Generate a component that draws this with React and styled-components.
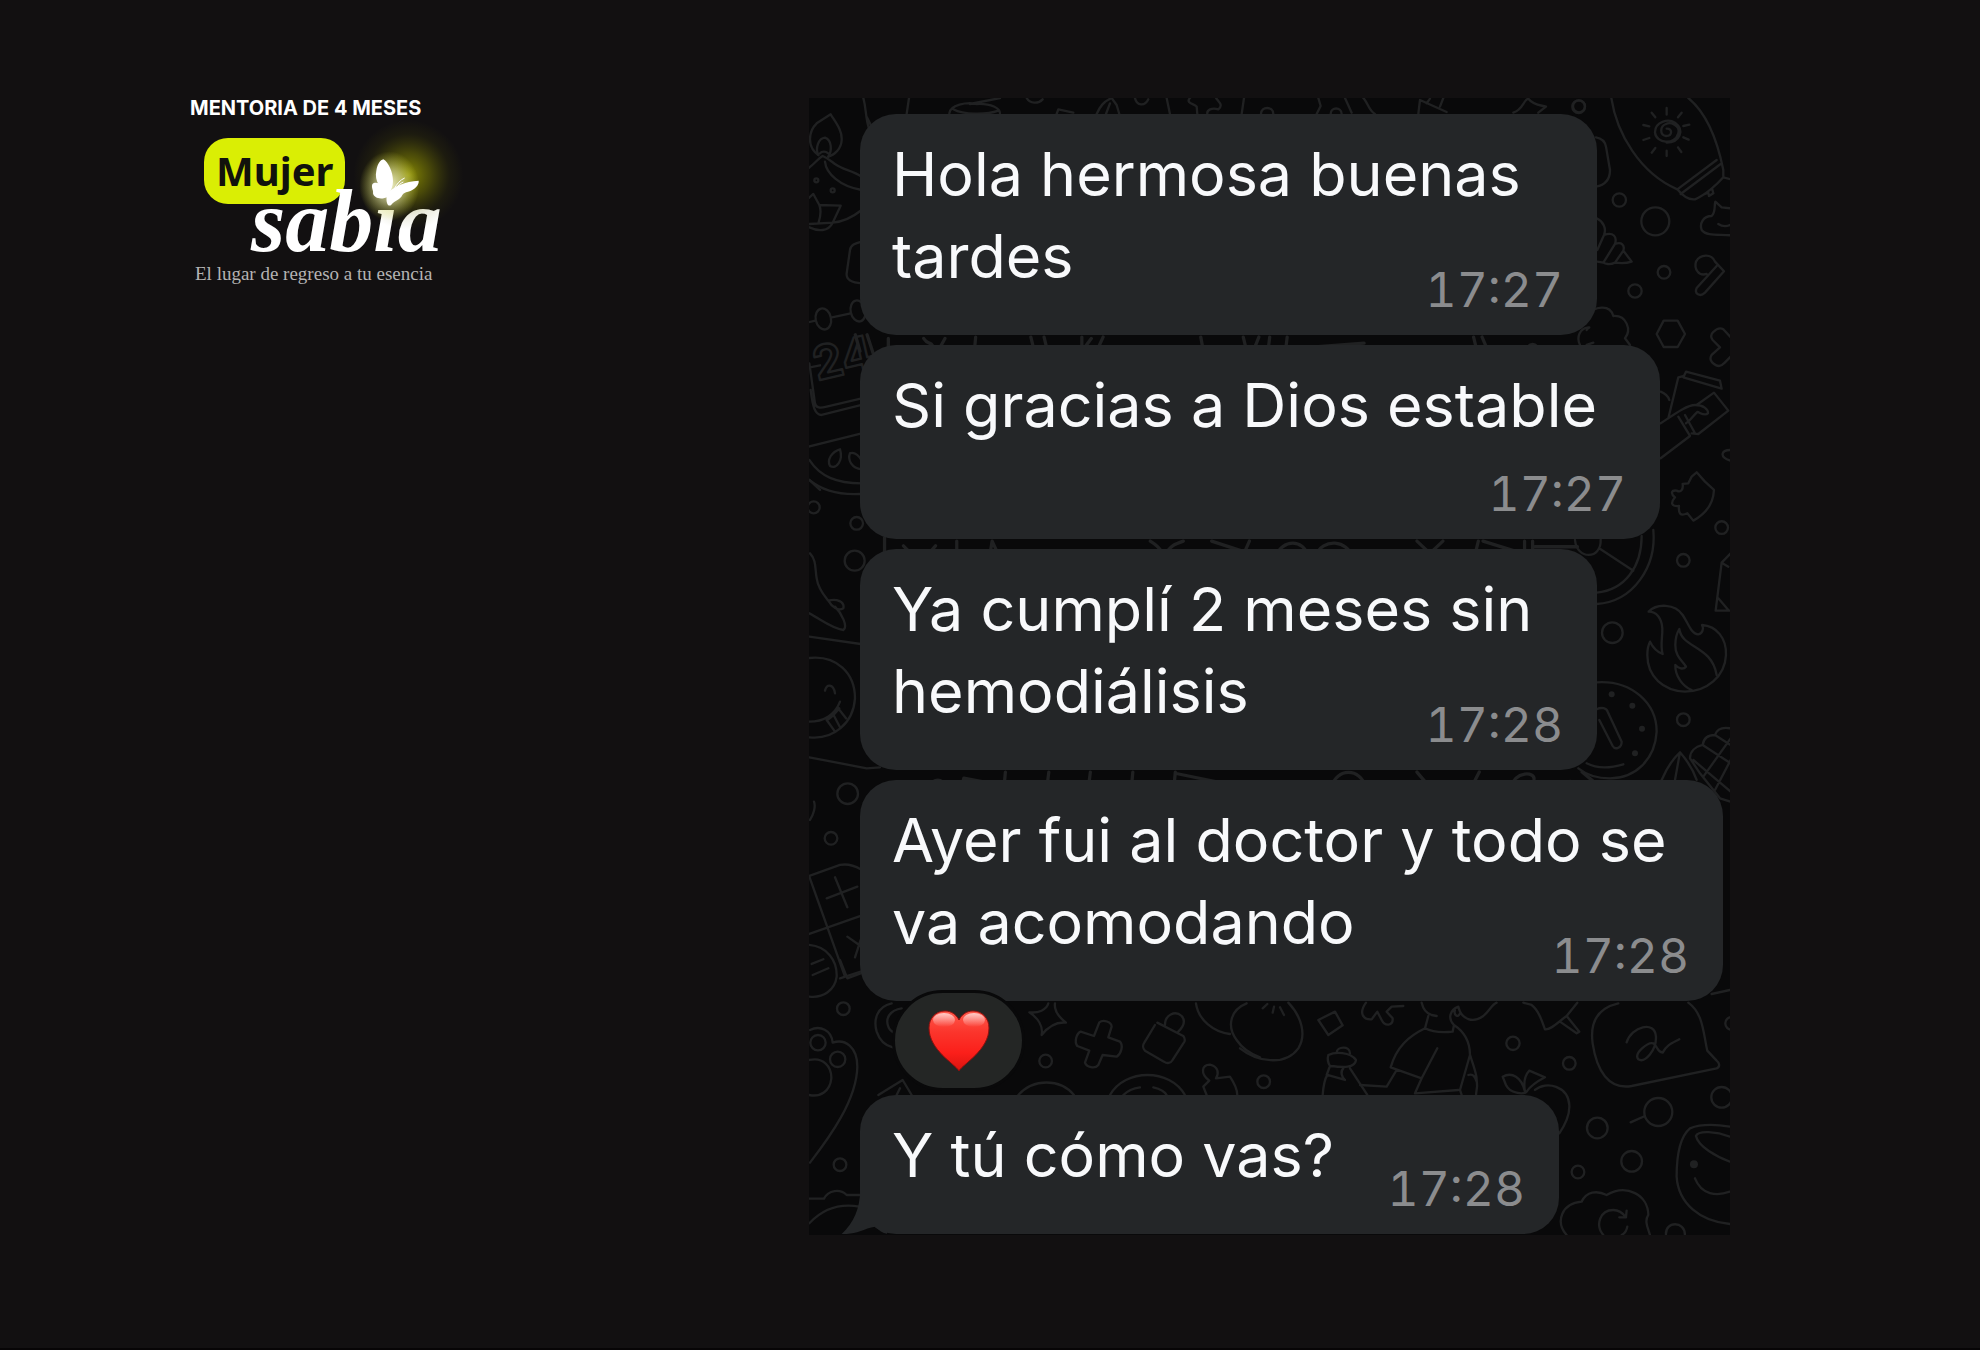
import React from 'react';
import styled, { createGlobalStyle } from 'styled-components';

const COLORS = {
  page: '#121011',
  wall: '#09090a',
  doodle: '#202122',
  bubble: '#242628',
  text: '#f8f9fb',
  time: '#8b8c8e',
  lime: '#daee04',
};

const MESSAGES = [
  { id: 1, text: 'Hola hermosa buenas tardes', time: '17:27', width: 737 },
  {
    id: 2,
    text: 'Si gracias a Dios estable',
    time: '17:27',
    width: 800,
    timeBelow: true,
  },
  {
    id: 3,
    text: 'Ya cumplí 2 meses sin hemodiálisis',
    time: '17:28',
    width: 737,
  },
  {
    id: 4,
    text: 'Ayer fui al doctor y todo se va acomodando',
    time: '17:28',
    width: 863,
    liked: true,
  },
  { id: 5, text: 'Y tú cómo vas?', time: '17:28', width: 699, last: true },
];

const Heart = () => (
  <svg width="62" height="62" viewBox="0 0 62 62" role="img" aria-label="Corazón">
    <defs>
      <linearGradient id="heartFill" x1="0" y1="0" x2="0" y2="1">
        <stop offset="0" stopColor="#ff5a4c" />
        <stop offset="0.35" stopColor="#fb352c" />
        <stop offset="0.7" stopColor="#fb1f1a" />
        <stop offset="1" stopColor="#d9140f" />
      </linearGradient>
      <linearGradient id="heartShine" x1="0" y1="0" x2="0" y2="1">
        <stop offset="0" stopColor="#fff" stopOpacity="0.7" />
        <stop offset="1" stopColor="#fff" stopOpacity="0" />
      </linearGradient>
    </defs>
    <path
      d="M31 61 C27 54 1 40 1 18 C1 8 8 1 17 1 C23 1 28 4 31 10 C34 4 39 1 45 1 C54 1 61 8 61 18 C61 40 35 54 31 61Z"
      fill="url(#heartFill)"
      stroke="#8e0f0d"
      strokeWidth="1"
    />
    <ellipse cx="16" cy="10" rx="11" ry="7" fill="url(#heartShine)" />
    <ellipse cx="46" cy="10" rx="11" ry="7" fill="url(#heartShine)" />
  </svg>
);

const Butterfly = () => (
  <ButterflySvg viewBox="510 150 360 300" aria-hidden="true">
    <defs>
      <radialGradient id="limeGlow">
        <stop offset="0" stopColor="#b0b300" stopOpacity="0.75" />
        <stop offset="0.4" stopColor="#8c8e00" stopOpacity="0.45" />
        <stop offset="0.75" stopColor="#6a6c00" stopOpacity="0.12" />
        <stop offset="1" stopColor="#6a6c00" stopOpacity="0" />
      </radialGradient>
      <radialGradient id="whiteGlow">
        <stop offset="0" stopColor="#ffffdc" stopOpacity="0.95" />
        <stop offset="0.5" stopColor="#f6f8b0" stopOpacity="0.5" />
        <stop offset="1" stopColor="#e8ec40" stopOpacity="0" />
      </radialGradient>
    </defs>
    <circle cx="715" cy="285" r="165" fill="url(#limeGlow)" />
    <ellipse cx="658" cy="318" rx="90" ry="104" fill="url(#whiteGlow)" />
    <g fill="#fff">
      <path d="M657 340 C632 330 612 302 619 272 C623 250 631 240 640 238 C655 246 669 276 669 303 C669 318 664 330 657 340Z" />
      <path d="M660 338 C642 312 616 302 607 313 C603 324 611 330 609 340 C612 356 636 360 654 350Z" />
      <path d="M655 336 C674 320 704 304 746 302 C748 313 735 330 714 335 C705 337 701 339 697 345 C692 358 674 362 664 374 C656 382 647 372 650 348Z" />
    </g>
    <path
      d="M672 328 C680 312 690 300 704 294 M676 328 C684 316 694 308 700 306"
      fill="none"
      stroke="#fff"
      strokeWidth="3"
    />
  </ButterflySvg>
);

// Wallpaper: loose outline drawings that show around the bubbles
const Wallpaper = () => (
  <WallpaperSvg viewBox="0 0 921 1137" width="921" height="1137" aria-hidden="true">
    {/* top left: lamp, calendar, melon */}
    <g transform="translate(-9 -8) scale(0.3333)">
      <path d="M55 195 C20 170 25 125 50 100 L92 73 C105 95 127 120 125 150 C124 175 105 195 85 200" />
      <path d="M55 195 C45 175 55 145 75 143 C95 150 97 180 85 200 M60 190 C65 183 78 183 84 190" />
      <path d="M25 235 C45 220 55 205 68 198 C85 205 95 215 105 222 C130 240 155 240 185 260 M75 215 C78 250 120 290 185 300" />
      <path d="M25 325 L40 312 L58 345 L122 347 L98 398 L28 402 M58 345 C66 365 60 385 55 400 M28 412 C55 425 85 425 98 398 C130 395 160 380 185 360" />
      <circle cx="49" cy="271" r="6" />
      <circle cx="98" cy="301" r="6" />
      <path d="M185 455 C165 460 152 465 150 480 L140 550 C138 570 155 578 185 580" />
      <ellipse cx="70" cy="687" rx="23" ry="32" transform="rotate(-12 70 687)" />
      <ellipse cx="174" cy="663" rx="22" ry="32" transform="rotate(-12 174 663)" />
      <path d="M25 697 L46 692 M96 682 L152 670 M28 820 L45 940 C48 955 60 955 80 950 L185 925 M32 900 C38 950 45 975 65 975 L185 945 M30 832 L60 826" />
      <text x="52" y="872" transform="rotate(-13 52 872)">24</text>
      <path d="M25 1070 L185 1030 M28 1110 C60 1160 110 1180 185 1180 M28 1170 L60 1200" />
      <path d="M120 1078 C95 1085 80 1110 90 1128 C110 1140 130 1110 120 1078Z M150 1090 C142 1110 155 1135 185 1138 M150 1090 C165 1085 180 1100 185 1112" />
      <path d="M190 24 C200 60 195 80 208 120 M200 80 L215 110 M327 24 L320 72 M448 70 C450 45 500 35 530 42 C575 40 600 55 600 70 M460 58 C490 75 560 75 595 62 M510 42 L600 24" />
      <path d="M680 24 C690 42 715 42 728 28 M770 72 L775 58 L820 68 M890 72 C900 50 910 35 935 24 L950 45 L958 72 M918 72 L930 40 M1005 24 C1010 48 1035 50 1045 28 M1100 24 L1110 72" />
    </g>
    <g transform="translate(371 -8) scale(0.3333)">
      <path d="M30 24 C15 40 45 42 50 50 L52 72 M108 24 C118 38 130 45 115 58 C95 52 80 60 82 72 M192 24 L185 72 M243 72 C243 48 280 48 280 72 M415 24 L422 48 L410 72 M452 72 C452 50 485 50 485 72" />
      <path d="M495 24 L515 68 M550 24 C565 40 565 60 585 72 M715 72 L720 30 L800 66 M740 40 L750 26 M790 24 L780 50 M1000 68 C1030 58 1030 30 1045 26 C1060 45 1080 45 1098 50 L1075 68" />
      <circle cx="1196" cy="50" r="19" />
    </g>

    {/* top right: surfboard, cone, carrots */}
    <g transform="translate(751 -8) scale(0.3333)">
      <circle cx="57" cy="49" r="18" />
      <path d="M154 24 C170 130 240 250 352 298 M385 24 C435 65 470 140 490 240 M352 298 L470 210 M362 312 L482 222 M352 298 C370 320 390 330 405 328 C435 315 470 285 490 262 L490 240 M490 262 L512 268 M435 312 L445 308 L447 318 L460 310 L456 295" />
      <path d="M345 98 C325 85 285 95 285 127 C287 160 345 168 355 130 C362 105 330 95 318 102 M345 98 C375 120 360 158 320 158 M318 102 C300 108 298 135 318 138 C338 138 338 115 320 116" />
      <path d="M320 54 L320 74 M275 68 L286 82 M365 68 L354 82 M250 105 L268 109 M370 108 L388 104 M250 150 L268 144 M370 142 L386 149 M275 188 L286 174 M320 182 L320 198 M354 172 L364 186" />
      <path d="M108 142 C128 145 135 155 138 170 L150 240 C150 270 135 285 108 290" />
      <circle cx="178" cy="330" r="20" />
      <circle cx="286" cy="394" r="42" />
      <circle cx="312" cy="547" r="19" />
      <circle cx="225" cy="603" r="20" />
      <path d="M110 385 C130 395 140 415 132 435 L112 480 M132 435 C160 425 172 440 165 462 L130 518 L112 515 M165 462 C185 455 195 465 190 482 L165 518 C150 525 135 522 130 518 M190 482 L215 515 C200 520 180 520 165 518" />
      <path d="M512 355 L485 352 L466 335 C462 350 468 365 455 378 C430 378 418 400 425 420 C440 440 480 432 512 436 M475 402 C490 412 500 410 512 404" />
      <path d="M440 552 C415 560 402 535 408 515 C420 492 455 490 465 515 L492 544 L435 608 C420 622 402 612 410 594 L470 528" />
      <path d="M60 765 C48 740 60 715 85 712 M85 675 C100 650 150 640 160 678 C200 675 215 720 195 745 L210 765 M80 720 C85 712 88 715 88 712 M80 765 L100 758" />
      <path d="M311 692 L353 692 L375 732 L353 771 L311 771 L290 732Z" />
      <path d="M512 742 L490 718 C480 712 470 716 460 726 C450 735 452 742 458 750 L480 772 L455 795 C448 805 452 815 462 822 C475 832 485 828 492 820 L512 800" />
      <path d="M370 862 L485 896 L480 872 L378 845Z M325 985 L355 862 L372 858 M302 1000 C340 975 380 945 405 945 C430 945 445 958 444 970 C435 980 420 968 412 966 C400 975 395 990 378 1000 M302 905 C320 912 325 920 328 930 M355 980 L390 1038 L302 1105 M375 975 L405 1030 M410 945 L462 908 L505 962 L415 1032 L395 1030" />
      <path d="M512 1080 C485 1080 475 1100 512 1112 M410 1147 L435 1175 L462 1200 C460 1240 440 1270 400 1292 L382 1270 C360 1280 355 1270 357 1248 C335 1250 330 1240 345 1222 C330 1210 335 1200 350 1202 C365 1210 370 1195 368 1182 L385 1180 L395 1160Z" />
      <circle cx="485" cy="1313" r="19" />
    </g>

    {/* right: citrus, fire, clock, pineapple */}
    <g transform="translate(751 432) scale(0.3333)">
      <path d="M280 0 C290 110 220 215 110 222 M245 18 C245 110 195 180 110 188 M122 58 L220 122 M45 30 C50 90 125 90 122 28" />
      <circle cx="370" cy="91" r="19" />
      <circle cx="157" cy="308" r="31" />
      <circle cx="370" cy="569" r="19" />
      <path d="M512 70 L485 98 L467 242 L512 242 M485 98 L505 110 M475 205 L505 240" />
      <path d="M266 245 C290 220 345 220 368 255 C385 280 395 315 415 313 C428 310 432 295 426 285 C470 288 500 325 498 375 C495 440 440 485 375 485 C310 482 262 440 262 375 C262 360 265 345 270 335 C280 355 290 365 308 372 C300 345 308 325 307 295 C305 265 290 245 266 245Z" />
      <path d="M395 480 C370 470 345 440 346 405 C355 415 370 420 378 410 C370 395 345 380 346 345 C346 325 350 310 358 297 C365 355 455 345 470 435" />
      <path d="M110 457 C215 450 290 520 290 605 C285 690 225 745 150 745 C110 745 80 735 55 715 M80 700 C115 718 150 715 190 703 M110 538 C125 530 140 535 143 545 L185 635 C185 655 165 660 158 648 L118 570" />
      <g className="dots">
        <circle cx="155" cy="493" r="9" />
        <circle cx="217" cy="527" r="9" />
        <circle cx="246" cy="596" r="9" />
        <circle cx="225" cy="670" r="9" />
      </g>
      <path d="M512 595 C485 590 470 600 465 615 C440 615 430 630 428 645 C405 650 390 665 390 685 L420 730 L480 805 L512 815 M305 750 C320 715 340 685 360 667 C380 690 400 720 410 750 M345 750 L360 667 M512 625 L430 740 M512 690 L465 780 M428 645 L512 700 M465 615 L512 645 M400 690 L512 785" />
    </g>

    {/* slits between bubbles */}
    <g transform="translate(51 232) scale(0.472)">
      <path d="M-10 10 L0 45 M15 10 L28 50 M60 18 L60 48 M135 18 C145 35 155 20 155 45 M180 18 L165 45 M245 15 L242 48 M362 15 L370 48 M390 15 L398 48 M470 15 L470 45 L490 18 M515 15 L500 48 M722 15 L728 48 M812 15 L820 48 M845 15 L832 48 M868 15 L864 48 M905 15 L902 40 M880 42 L1068 28 M1300 15 L1308 48 M1318 15 L1332 48 M1412 48 C1412 25 1438 25 1438 48" />
    </g>
    <g transform="translate(51 436) scale(0.472)">
      <path d="M52 8 L52 45 M92 25 L115 48 M160 25 L140 48 M205 15 L205 48 M275 45 L280 15 L295 48 M615 15 C640 30 640 40 645 48 C655 25 670 20 685 15 M745 15 L815 38 L825 15 M880 48 C895 10 940 10 950 48 M965 48 C980 5 1035 15 1042 48 M1180 15 L1215 48 M1235 15 L1200 48 M1310 15 L1302 48 M1320 15 L1400 40 M1408 15 L1408 48 M1425 15 L1425 48 M1430 27 L1520 27" />
    </g>
    <g transform="translate(51 667) scale(0.472)">
      <path d="M150 45 C155 28 175 28 178 45 M215 48 L220 28 L295 42 M308 15 L305 48 M400 15 L396 48 M488 15 L484 48 M578 15 L575 48 M668 15 L665 48 M670 18 L800 45 M998 48 C1010 5 1060 5 1072 48 M1180 15 L1208 48 M1312 15 L1295 48 M1378 48 C1390 10 1430 15 1428 30 M1490 48 C1495 30 1515 30 1518 48 M1530 15 L1560 40" />
    </g>

    {/* left: balloons, smiley, first aid card */}
    <g transform="translate(-9 382) scale(0.3333)">
      <circle cx="41" cy="82" r="18" />
      <circle cx="170" cy="130" r="19" />
      <circle cx="164" cy="242" r="30" />
      <path d="M28 0 C70 35 120 45 180 42 M30 220 C50 240 45 270 50 295 C55 330 80 355 85 362 C110 355 135 365 130 385 C115 395 95 380 85 362 M105 380 C125 400 145 440 130 450 C95 445 65 420 28 400 M28 470 L182 492" />
      <path d="M28 534 C110 525 165 580 165 655 C160 730 100 780 28 772 M28 725 C70 725 105 705 120 665 M75 632 C80 612 100 610 105 640 M80 720 L105 755 M98 700 L120 742 M112 682 L138 715 M80 720 C95 715 105 700 118 685" />
      <path d="M28 832 L200 865 L240 862 M42 965 C48 980 40 1005 30 1020" />
      <circle cx="143" cy="941" r="31" />
      <circle cx="93" cy="1075" r="19" />
      <path d="M28 1188 L120 1155 C145 1150 165 1158 182 1168 M28 1190 L135 1490 M80 1255 L172 1220 M105 1192 L142 1282 M28 1362 L182 1308 M142 1370 L182 1398 M182 1380 L165 1432 M182 1475 L120 1495" />
      <path d="M28 1395 C80 1400 112 1440 110 1490 C105 1530 70 1555 28 1550 M35 1452 L70 1438 M38 1485 L85 1465" />
    </g>

    {/* bottom left: paw, plaster, lock */}
    <g transform="translate(-9 862) scale(0.3333)">
      <circle cx="130" cy="146" r="19" />
      <circle cx="54" cy="248" r="23" />
      <circle cx="113" cy="298" r="23" />
      <circle cx="120" cy="614" r="19" />
      <circle cx="737" cy="303" r="19" />
      <path d="M30 210 C60 195 95 210 98 248 C135 235 172 260 172 320 C170 420 90 530 30 608 M28 300 C70 290 95 320 94 355 C90 395 60 412 28 405" />
      <path d="M120 0 L142 55 L182 40 M275 130 C230 140 220 180 230 215 C240 245 260 258 278 262 M305 145 C270 150 255 175 265 200 C268 210 275 215 285 220 M235 405 L308 360 L335 405 M290 405 L300 385" />
      <path d="M28 716 L72 716 C85 690 120 685 140 705 L182 705 M28 790 C70 745 120 730 178 740" />
      <path d="M745 130 C740 150 715 160 688 157 C715 175 730 200 725 225 C745 200 770 185 798 188 C775 170 762 150 765 130" />
      <path d="M898 187 C910 178 935 185 935 200 L925 232 L960 245 C970 255 965 280 950 290 L908 285 L895 315 C885 328 860 322 855 308 L868 272 L832 258 C822 245 830 220 842 215 L882 228Z" />
      <path d="M1072 188 L1150 228 C1156 235 1156 245 1150 250 L1118 300 C1112 310 1102 312 1092 305 L1035 272 C1028 265 1028 255 1033 248 L1065 195 M1095 195 C1095 165 1125 150 1145 168 C1160 185 1145 205 1135 215" />
      <path d="M1188 130 C1195 180 1240 215 1290 222 M1340 130 C1290 150 1280 200 1310 240 C1330 270 1360 285 1380 292" />
      <path d="M655 405 C700 355 780 355 822 405 M930 405 C975 325 1110 325 1155 405 M970 405 C985 390 1000 385 1020 382 M1060 382 C1085 388 1095 395 1100 405 M1220 405 L1210 380 L1228 362 C1200 340 1205 315 1230 314 C1255 320 1258 340 1248 355 L1290 350 C1300 365 1312 385 1312 405" />
    </g>

    {/* bottom right: person, chat bubble, mug, cloud */}
    <g transform="translate(431 882) scale(0.3333)">
      <path d="M0 205 C50 245 135 260 175 205 C200 165 185 110 145 68 M68 85 L82 72 M98 98 L102 80 M132 105 L120 82" />
      <path d="M235 120 L285 95 L308 136 L265 165Z" />
      <path d="M378 68 C355 100 370 120 395 118 L412 95 L425 120 C435 140 460 138 458 115 L440 95 L455 80 L490 78" />
      <path d="M545 68 C550 90 560 100 575 105 L590 108 M565 108 L555 145 C580 158 610 158 638 155 L642 135 C622 115 630 90 655 80 M642 135 C680 160 690 190 690 225 M655 80 C665 120 700 130 730 108 C750 90 755 75 770 68 M660 100 C655 115 640 105 645 90 M555 145 C505 170 470 200 452 262 L545 295 L592 205 M545 295 L525 340 L655 330 M470 270 L440 320 L360 315" />
      <path d="M690 225 L660 330 L665 345 M690 225 C705 270 718 300 708 345 M685 285 C700 280 705 290 710 305 M248 345 C250 320 252 300 262 285 L315 300 M330 265 L382 345 M265 225 C285 215 330 215 348 240 C345 265 310 262 270 258 C262 245 262 235 265 225Z M270 258 L260 285 M310 265 C300 275 305 290 315 300 M290 218 C290 200 330 195 330 220" />
      <circle cx="71" cy="305" r="19" />
      <circle cx="819" cy="190" r="20" />
      <circle cx="988" cy="250" r="19" />
      <circle cx="1072" cy="444" r="31" />
      <circle cx="1255" cy="396" r="42" />
      <circle cx="1445" cy="352" r="31" />
      <circle cx="1175" cy="544" r="31" />
      <circle cx="1014" cy="576" r="19" />
      <circle cx="1475" cy="130" r="19" />
      <path d="M1215 408 L1172 427 M850 68 L875 75 C895 90 905 120 915 148 C935 150 955 125 980 108 L1012 68 M980 108 L1018 155 L1010 160 L960 125" />
      <path d="M1135 70 C1070 85 1050 130 1058 190 C1070 270 1105 330 1175 318 L1430 265 C1442 260 1438 248 1430 242 L1402 212 C1390 160 1390 100 1345 68" />
      <path d="M1160 187 C1175 140 1245 120 1248 170 C1250 210 1215 250 1195 238 C1180 220 1225 185 1240 190 C1255 200 1250 215 1268 218 C1280 195 1295 190 1318 178 M1415 42 L1470 30" />
      <path d="M855 335 C850 305 855 285 868 272 L915 292 C890 305 870 320 860 335 C850 345 810 340 798 315 L788 290 C815 275 845 290 855 335 M885 330 C920 300 985 320 988 375 C990 405 975 435 958 460" />
      <path d="M1470 440 C1420 432 1375 435 1350 445 C1320 470 1310 530 1310 590 C1315 670 1380 725 1470 732 M1470 470 C1430 455 1375 450 1368 468 C1375 500 1430 530 1470 545 M1365 595 C1385 645 1430 650 1470 635" />
      <g className="dots">
        <circle cx="1362" cy="553" r="12" />
      </g>
      <path d="M980 765 C945 725 965 670 1025 665 C1040 635 1070 630 1100 645 C1160 610 1225 645 1225 705 C1212 725 1225 745 1230 765 M1090 765 C1065 735 1080 690 1120 690 C1135 690 1148 698 1158 712 M1160 692 L1158 712 L1138 712 M1162 740 C1160 752 1155 760 1145 765 M1278 765 C1275 722 1335 722 1335 765" />
    </g>
  </WallpaperSvg>
);

const Message = ({ message }) => (
  <MessageItem>
    <Bubble $width={message.width}>
      <Text>{message.text}</Text>
      <Time $below={message.timeBelow}>{message.time}</Time>
      {message.last && (
        <Tail viewBox="123 690 138 132" aria-hidden="true">
          <path d="M181 680 C181 740 165 785 125 822 C145 823 165 820 180 814 C195 808 210 802 225 800 C238 812 250 820 264 822 L264 680Z" />
        </Tail>
      )}
    </Bubble>
    {message.liked && (
      <Reaction>
        <Heart />
      </Reaction>
    )}
  </MessageItem>
);

const App = () => (
  <>
    <GlobalStyle />
    <Page>
      <Brand>
        <Program>MENTORIA DE 4 MESES</Program>
        <Logo>
          <Pill>Mujer</Pill>
          <Script>sabıa</Script>
          <Butterfly />
        </Logo>
        <Tagline>El lugar de regreso a tu esencia</Tagline>
      </Brand>
      <Chat>
        <Wallpaper />
        <MessageList>
          {MESSAGES.map((message) => (
            <Message key={message.id} message={message} />
          ))}
        </MessageList>
      </Chat>
    </Page>
  </>
);

const GlobalStyle = createGlobalStyle`
  * {
    box-sizing: border-box;
  }
  body {
    margin: 0;
    background: ${COLORS.page};
  }
`;

const Page = styled.main`
  display: flex;
  justify-content: space-between;
  align-items: flex-start;
  gap: 40px;
  min-height: 100vh;
  padding: 98px 250px 98px 190px;
  border-bottom: 2px solid #070506;
`;

const Brand = styled.header`
  display: flex;
  flex-direction: column;
  flex-shrink: 0;
`;

const Program = styled.p`
  margin: 0;
  color: #fff;
  font-family: Inter, sans-serif;
  font-size: 20px;
  font-weight: 700;
  line-height: 20px;
`;

const Logo = styled.h1`
  position: relative;
  display: flex;
  flex-direction: column;
  align-items: flex-start;
  margin: 20px 0 0 14px;
`;

const Pill = styled.span`
  padding: 0 12px;
  border-radius: 24px;
  background: ${COLORS.lime};
  color: #11120c;
  font-family: 'Noto Sans', sans-serif;
  font-size: 40px;
  font-weight: 700;
  line-height: 66px;
`;

const Script = styled.span`
  position: relative;
  margin: -26px 0 0 47px;
  color: #fff;
  font-family: 'Liberation Serif', serif;
  font-size: 88px;
  font-style: italic;
  font-weight: 700;
  line-height: 88px;
`;

const ButterflySvg = styled.svg`
  position: absolute;
  top: -8px;
  left: 136px;
  width: 120px;
  height: 100px;
  overflow: visible;
`;

const Tagline = styled.p`
  margin: -4px 0 0 5px;
  color: #b4b3b3;
  font-family: 'Liberation Serif', serif;
  font-size: 19px;
  line-height: 24px;
`;

const Chat = styled.section`
  position: relative;
  flex: 0 1 921px;
  overflow: hidden;
  padding: 16px 7px 1px 51px;
  background: ${COLORS.wall};
`;

const WallpaperSvg = styled.svg`
  position: absolute;
  top: 0;
  left: 0;
  fill: none;
  stroke: ${COLORS.doodle};
  stroke-width: 7px;
  stroke-linecap: round;
  stroke-linejoin: round;

  text {
    font-family: Inter, sans-serif;
    font-size: 140px;
    font-weight: 700;
  }
  .dots {
    fill: ${COLORS.doodle};
    stroke: none;
  }
`;

const MessageList = styled.ul`
  position: relative;
  display: flex;
  flex-direction: column;
  gap: 10px;
  margin: 0;
  padding: 0;
  list-style: none;
`;

const MessageItem = styled.li`
  display: flex;
  flex-direction: column;
  align-items: flex-start;
`;

const Bubble = styled.div`
  position: relative;
  display: flow-root;
  width: ${(props) => props.$width}px;
  max-width: 100%;
  padding: 19px 34px 15px 32px;
  border-radius: 36px;
  background: ${COLORS.bubble};
  font-family: Inter, sans-serif;
  font-size: 61px;
  line-height: 82px;
`;

const Text = styled.span`
  color: ${COLORS.text};
`;

// Floats beside the last line of text, or under it when there is no room
const Time = styled.time`
  float: right;
  margin-top: ${(props) => (props.$below ? '18px' : '45px')};
  color: ${COLORS.time};
  font-size: 48px;
  font-variant-numeric: tabular-nums;
  line-height: 60px;
`;

const Tail = styled.svg`
  position: absolute;
  bottom: 0;
  left: -19px;
  width: 46px;
  height: 44px;
  fill: ${COLORS.bubble};
`;

const Reaction = styled.div`
  position: relative;
  display: flex;
  align-items: center;
  justify-content: center;
  width: 133px;
  height: 101px;
  margin: -11px 0 -6px 32px;
  border: 3px solid ${COLORS.wall};
  border-radius: 51px;
  background: #242625;
`;

export default App;
